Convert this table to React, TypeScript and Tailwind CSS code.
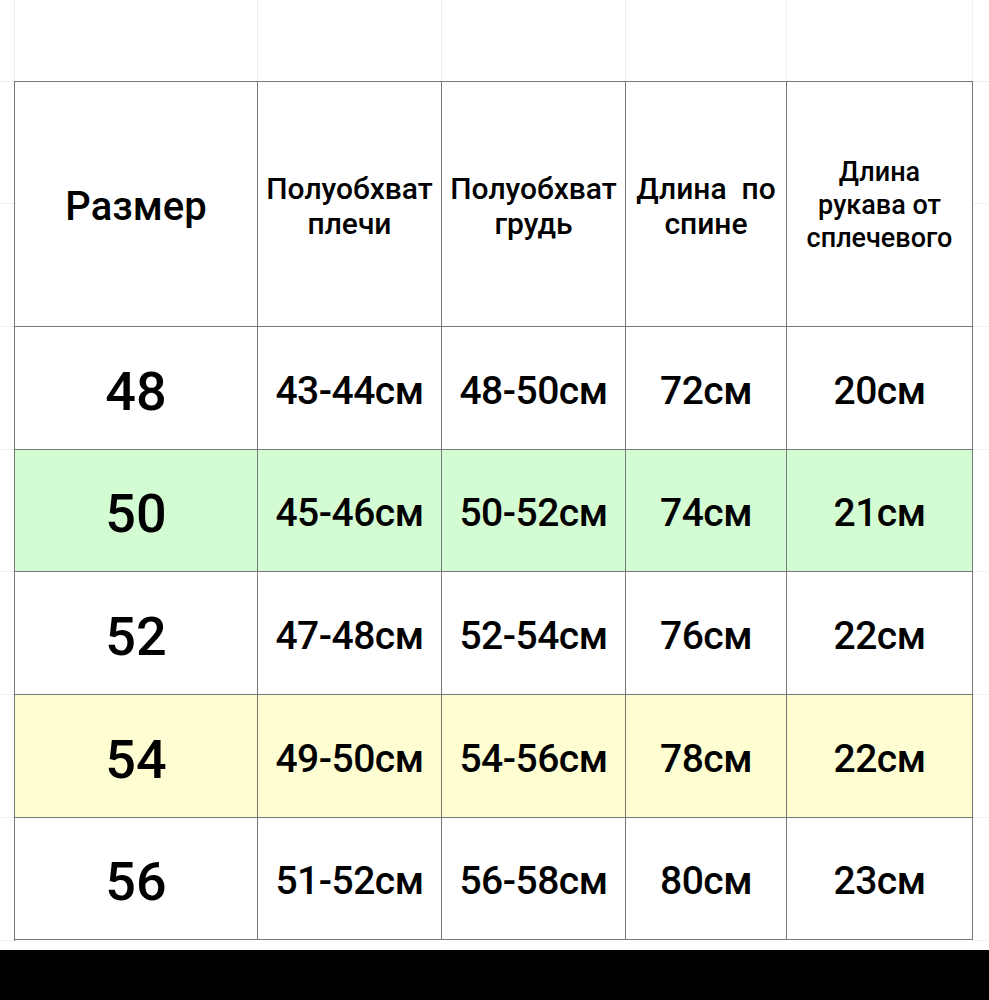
import React from 'react';

const rows = [
  { size: '48', values: ['43-44см', '48-50см', '72см', '20см'], bg: 'bg-white', h: 'h-[123px]' },
  { size: '50', values: ['45-46см', '50-52см', '74см', '21см'], bg: 'bg-[#d3fcd3]', h: 'h-[122px]' },
  { size: '52', values: ['47-48см', '52-54см', '76см', '22см'], bg: 'bg-white', h: 'h-[123px]' },
  { size: '54', values: ['49-50см', '54-56см', '78см', '22см'], bg: 'bg-[#fefed2]', h: 'h-[123px]' },
  { size: '56', values: ['51-52см', '56-58см', '80см', '23см'], bg: 'bg-white', h: 'h-[122px]' },
];

const marginRows = ['h-[122px]', 'h-[123px]', 'h-[123px]', 'h-[122px]', 'h-[123px]', 'h-[123px]', 'h-[123px]'];

const cols = 'grid grid-cols-[243px_184px_184px_161px_186px]';

const Margin = ({ className }: { className: string }) => (
  <div className={`${className} flex flex-col border-t border-[#eeeeee]`}>
    {marginRows.map((h, i) => (
      <div key={i} className={`${h} border-b border-[#f0f0f0]`} />
    ))}
  </div>
);

const Faint = () => (
  <div className="flex">
    <div className="w-[14px]" />
    <div className={`${cols} border-l border-[#eeeeee] h-full`}>
      {[0, 1, 2, 3, 4].map((i) => (
        <div key={i} className="border-r border-[#eeeeee]" />
      ))}
    </div>
  </div>
);

export default function App() {
  return (
    <div
      className="w-[989px] h-[1000px] bg-white flex flex-col text-black"
      style={{ fontFamily: 'Roboto, "Noto Sans", sans-serif' }}
    >
      <div className="h-[81px] flex">
        <div className="w-[14px]" />
        <div className={`${cols} border-l border-[#eeeeee]`}>
          {[0, 1, 2, 3, 4].map((i) => (
            <div key={i} className="border-r border-[#eeeeee]" />
          ))}
        </div>
      </div>

      <div className="flex">
        <Margin className="w-[14px]" />

        {/* size table */}
        <div className="border-l border-t border-[#777777]">
          <div className={`${cols} h-[245px]`}>
            <div className="border-r border-b border-[#777777] flex items-center justify-center text-[40px] font-medium pt-[6px]">
              Размер
            </div>
            <div className="border-r border-b border-[#777777] flex items-center justify-center text-center text-[30px] leading-[35px] font-medium pt-[4px]">
              Полуобхват<br />плечи
            </div>
            <div className="border-r border-b border-[#777777] flex items-center justify-center text-center text-[30px] leading-[35px] font-medium pt-[4px]">
              Полуобхват<br />грудь
            </div>
            <div className="border-r border-b border-[#777777] flex items-center justify-center text-center text-[30px] leading-[35px] font-medium pt-[4px] whitespace-pre">
              {'Длина  по\nспине'}
            </div>
            <div className="border-r border-b border-[#777777] flex items-center justify-center text-center text-[27px] leading-[33px] font-medium pt-[2px]">
              Длина<br />рукава от<br />сплечевого
            </div>
          </div>

          {rows.map((r) => (
            <div key={r.size} className={`${cols} ${r.h} ${r.bg}`}>
              <div className="border-r border-b border-[#777777] flex items-center justify-center text-[54px] font-medium pt-[6px]">
                {r.size}
              </div>
              {r.values.map((v, i) => (
                <div
                  key={i}
                  className="border-r border-b border-[#777777] flex items-center justify-center text-[39px] font-medium pt-[6px] tracking-[-0.5px]"
                >
                  {v}
                </div>
              ))}
            </div>
          ))}
        </div>

        <Margin className="flex-1" />
      </div>

      <div className="h-[9px]">
        <Faint />
      </div>

      <div className="flex-1 bg-black" />
    </div>
  );
}
